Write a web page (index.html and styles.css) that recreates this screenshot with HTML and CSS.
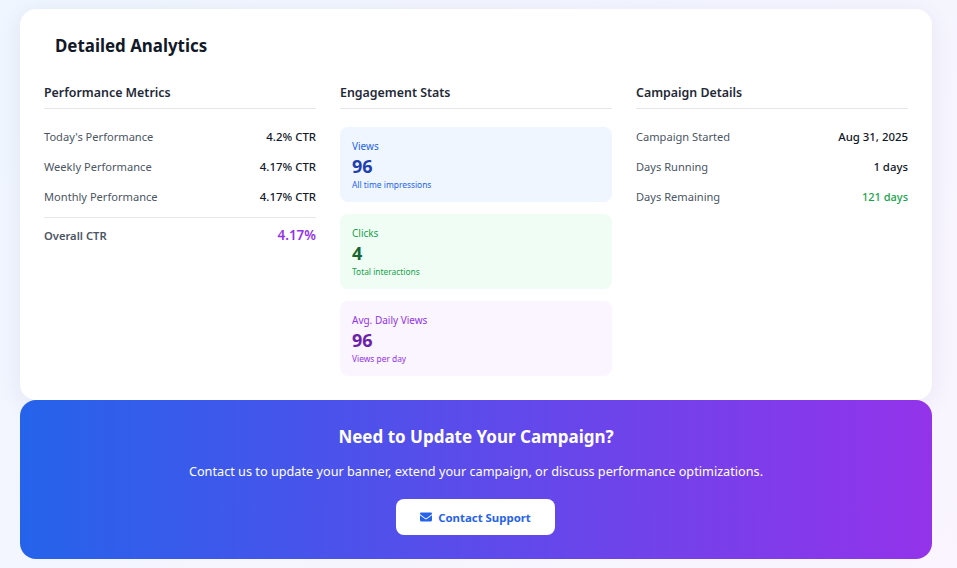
FILE: index.html
```html
<!DOCTYPE html>
<html lang="en">
<head>
<meta charset="utf-8">
<title>Detailed Analytics</title>
<link rel="stylesheet" href="styles.css">
</head>
<body>
<main class="page">
  <section class="card">
    <h2 class="card-title">Detailed Analytics</h2>
    <div class="columns">
      <div class="column">
        <h3 class="column-title">Performance Metrics</h3>
        <div class="rows">
          <div class="row"><span class="label">Today's Performance</span><span class="value">4.2% CTR</span></div>
          <div class="row"><span class="label">Weekly Performance</span><span class="value">4.17% CTR</span></div>
          <div class="row"><span class="label">Monthly Performance</span><span class="value">4.17% CTR</span></div>
          <div class="row row-total"><span class="label-total">Overall CTR</span><span class="value-total">4.17%</span></div>
        </div>
      </div>
      <div class="column">
        <h3 class="column-title">Engagement Stats</h3>
        <div class="stats">
          <div class="stat stat-blue">
            <div class="stat-label">Views</div>
            <div class="stat-number">96</div>
            <div class="stat-note">All time impressions</div>
          </div>
          <div class="stat stat-green">
            <div class="stat-label">Clicks</div>
            <div class="stat-number">4</div>
            <div class="stat-note">Total interactions</div>
          </div>
          <div class="stat stat-purple">
            <div class="stat-label">Avg. Daily Views</div>
            <div class="stat-number">96</div>
            <div class="stat-note">Views per day</div>
          </div>
        </div>
      </div>
      <div class="column">
        <h3 class="column-title">Campaign Details</h3>
        <div class="rows">
          <div class="row"><span class="label">Campaign Started</span><span class="value">Aug 31, 2025</span></div>
          <div class="row"><span class="label">Days Running</span><span class="value">1 days</span></div>
          <div class="row"><span class="label">Days Remaining</span><span class="value value-green">121 days</span></div>
        </div>
      </div>
    </div>
  </section>
  <section class="cta">
    <h2 class="cta-title">Need to Update Your Campaign?</h2>
    <p class="cta-text">Contact us to update your banner, extend your campaign, or discuss performance optimizations.</p>
    <a class="cta-button" href="#">
      <svg class="mail-icon" viewBox="0 0 512 512" aria-hidden="true"><path d="M48 64C21.5 64 0 85.500 0 112c0 15.100 7.100 29.300 19.200 38.400L236.800 313.600c11.400 8.500 27 8.500 38.400 0L492.800 150.400c12.100-9.100 19.200-23.300 19.200-38.400 0-26.500-21.500-48-48-48H48zM0 176V384c0 35.300 28.700 64 64 64H448c35.300 0 64-28.700 64-64V176L294.400 339.200c-22.800 17.100-54 17.100-76.800 0L0 176z"/></svg>
      <span>Contact Support</span>
    </a>
  </section>
</main>
</body>
</html>
```

FILE: styles.css
```css
* { box-sizing: border-box; }
html, body { margin: 0; height: 100%; }
body {
  background: linear-gradient(135deg, #eff6ff 0%, #faf5ff 100%);
  font-family: "Noto Sans", "Open Sans", sans-serif;
  overflow: hidden;
}
.page {
  padding: 9px 25px 9px 20px;
  width: 957px;
}
.card {
  background: #fff;
  border-radius: 16px;
  box-shadow: 0 4px 24px rgba(40,40,90,.08);
  height: 391px;
  padding: 24px;
}
.card-title {
  margin: 1px 0 18px 11px;
  color: #111827;
  font-size: 16.9px;
  font-weight: 700;
  line-height: 24px;
}
.columns {
  display: grid;
  grid-template-columns: repeat(3, 272px);
  gap: 24px;
}
.column-title {
  margin: 0;
  padding-top: 5px;
  height: 33px;
  border-bottom: 1px solid #e5e7eb;
  color: #1f2937;
  font-size: 12.4px;
  font-weight: 600;
  line-height: 24px;
}
.rows {
  display: flex;
  flex-direction: column;
  gap: 12px;
  margin-top: 19px;
}
.row {
  display: flex;
  justify-content: space-between;
  align-items: center;
  height: 18px;
}
.label { color: #4b5563; font-size: 11.1px; line-height: 18px; }
.value { color: #111827; font-size: 11.4px; font-weight: 500; line-height: 18px; }
.value-green { color: #16a34a; font-size: 11px; }
.row-total {
  margin-top: -1px;
  border-top: 1px solid #e5e7eb;
  height: 35px;
}
.label-total { color: #4b5563; font-size: 11.2px; font-weight: 600; }
.value-total { color: #9333ea; font-size: 13.4px; font-weight: 600; }
.stats {
  display: flex;
  flex-direction: column;
  gap: 12px;
  margin-top: 18px;
}
.stat {
  border-radius: 8px;
  height: 75px;
  padding: 12px;
}
.stat-label { font-size: 10px; line-height: 14px; margin-bottom: 1px; }
.stat-number { font-size: 18px; font-weight: 700; line-height: 24px; }
.stat-note { font-size: 8.4px; line-height: 12px; margin-top: 1px; }
.stat-blue { background: #eff6ff; color: #2563eb; }
.stat-blue .stat-number { color: #1e40af; }
.stat-green { background: #f0fdf4; color: #16a34a; }
.stat-green .stat-number { color: #166534; }
.stat-purple { background: #faf5ff; color: #9333ea; }
.stat-purple .stat-number { color: #6b21a8; }
.cta {
  background: linear-gradient(90deg, #2563eb 0%, #9333ea 100%);
  border-radius: 16px;
  color: #fff;
  display: flex;
  flex-direction: column;
  align-items: center;
  height: 159px;
  padding-top: 24px;
  position: relative;
}
.cta-title {
  margin: 0;
  font-size: 17px;
  font-weight: 700;
  line-height: 26px;
}
.cta-text {
  margin: 11px 0 0;
  font-size: 12.7px;
  line-height: 20px;
}
.cta-button {
  align-items: center;
  background: #fff;
  border-radius: 8px;
  color: #2563eb;
  display: flex;
  font-size: 11.4px;
  font-weight: 700;
  gap: 6px;
  height: 36px;
  justify-content: center;
  margin: 18px 1px 0 0;
  text-decoration: none;
  width: 159px;
}
.mail-icon { fill: #2563eb; height: 12px; width: 12px; }
```
